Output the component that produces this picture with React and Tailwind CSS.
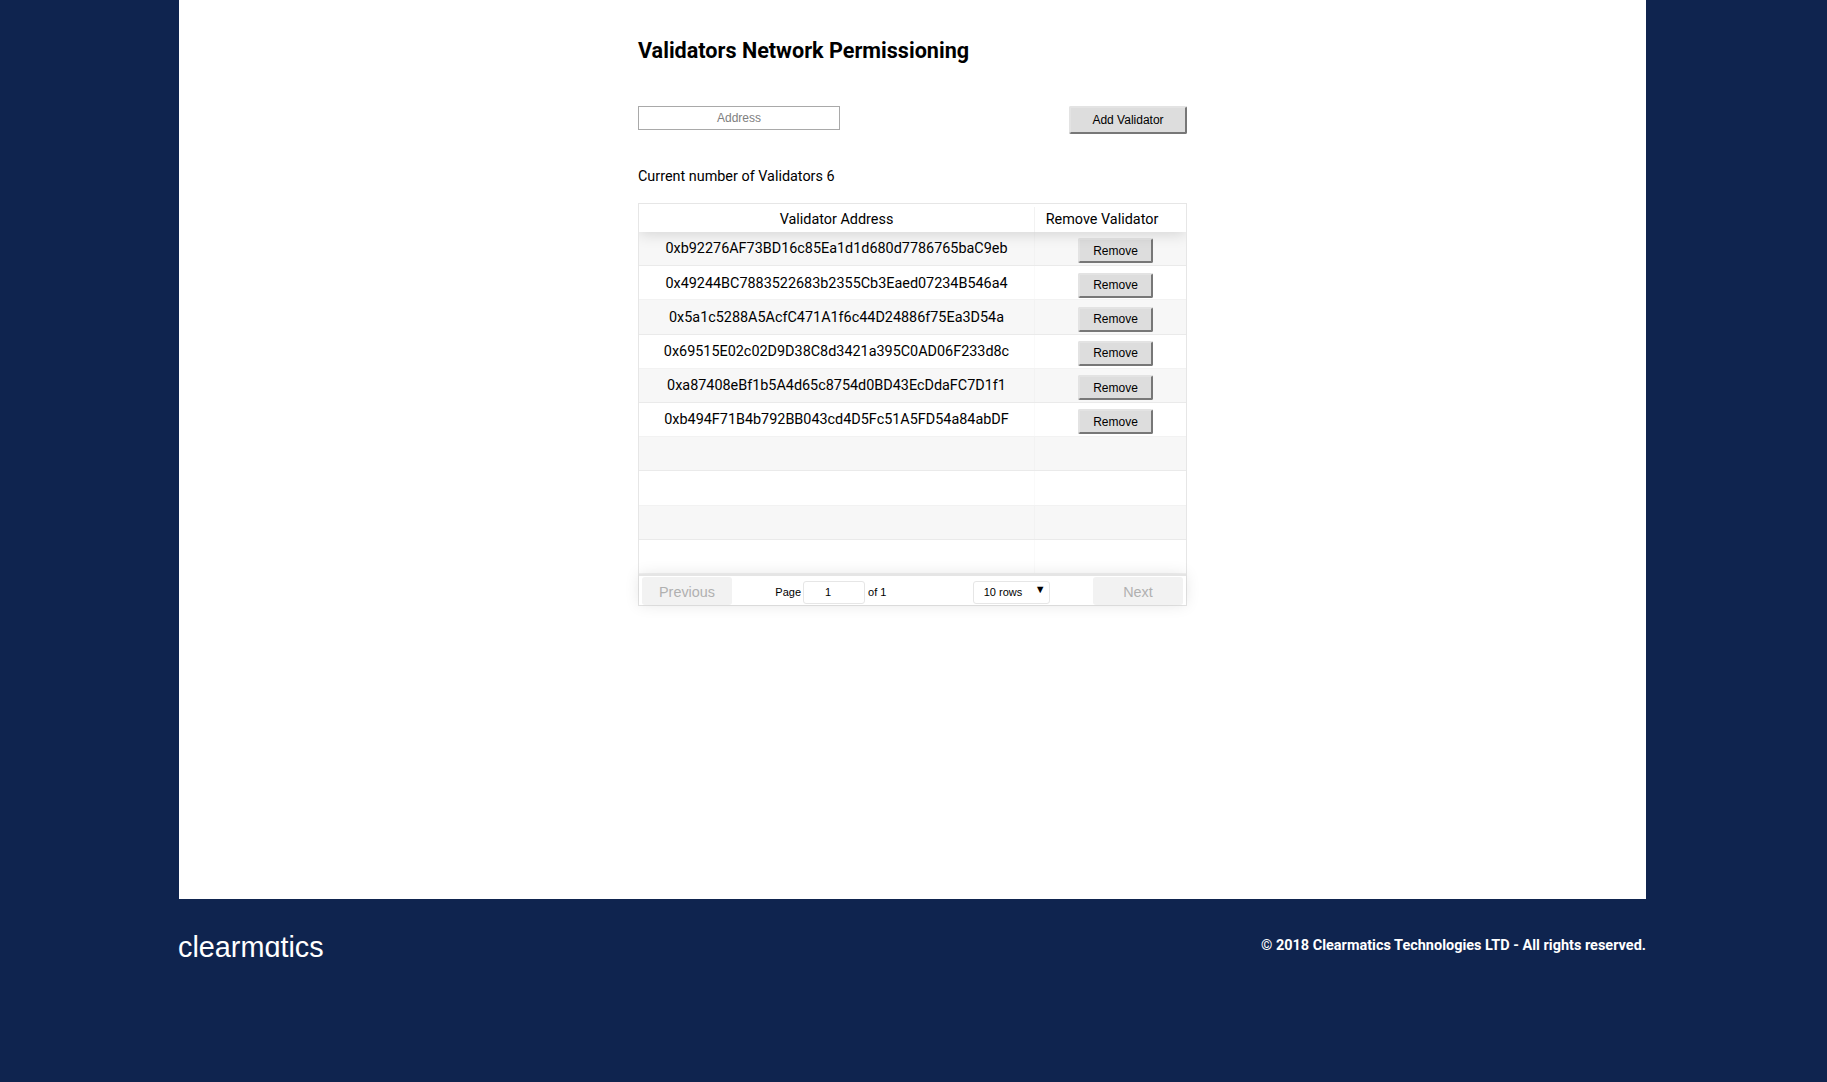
const addrs = [
  "0xb92276AF73BD16c85Ea1d1d680d7786765baC9eb",
  "0x49244BC7883522683b2355Cb3Eaed07234B546a4",
  "0x5a1c5288A5AcfC471A1f6c44D24886f75Ea3D54a",
  "0x69515E02c02D9D38C8d3421a395C0AD06F233d8c",
  "0xa87408eBf1b5A4d65c8754d0BD43EcDdaFC7D1f1",
  "0xb494F71B4b792BB043cd4D5Fc51A5FD54a84abDF",
  "", "", "", "",
];

function OutsetButton({ children, className }) {
  return (
    <button className={"bg-[#dddddd] text-black border-2 border-t-[#e3e3e3] border-l-[#e3e3e3] border-r-[#777777] border-b-[#777777] rounded-[2px] font-['Liberation_Sans',sans-serif] " + className}>
      {children}
    </button>
  );
}

export default function App() {
  return (
    <div className="min-h-[1082px] bg-[#0f244f] font-['Roboto',sans-serif] text-[14.4px] text-black">
      <main className="ml-[179px] mr-[181px] h-[899px] bg-white">
        <div className="ml-[459px] w-[549px]">
          <h1 className="pt-[37px] text-[21.6px] leading-[28px] font-bold">Validators Network Permissioning</h1>
          <div className="mt-[41px] flex items-start justify-between">
            <input
              placeholder="Address"
              className="h-[24px] w-[202px] border border-[#a9a9a9] pb-[1px] text-center font-['Liberation_Sans',sans-serif] text-[12px] placeholder:text-[#808080]"
            />
            <OutsetButton className="h-[28px] w-[118px] text-[12px]">Add Validator</OutsetButton>
          </div>
          <p className="mt-[33px] h-[20px] leading-[20px]">Current number of Validators 6</p>
          <div className="mt-[16px] h-[403px] w-[549px] border border-[#e6e6e6] bg-white">
            <div className="overflow-hidden">
              <div className="relative z-10 flex h-[28px] bg-white pt-[3px] shadow-[0_2px_15px_0_rgba(0,0,0,0.15)]">
                <div className="flex w-[396px] items-center justify-center border-r border-[rgba(0,0,0,0.05)]">Validator Address</div>
                <div className="flex flex-1 items-center justify-center pr-[17px]">Remove Validator</div>
              </div>
              {addrs.map((a, i) => (
                <div key={i} className={"flex h-[34.2px] border-b border-[rgba(0,0,0,0.05)] " + (i % 2 === 0 ? "bg-[#f7f7f7]" : "bg-white")}>
                  <div className="w-[396px] border-r border-[rgba(0,0,0,0.02)] pt-[7.4px] text-center leading-[20px]">{a}</div>
                  <div className="flex flex-1 items-start justify-center pt-[6.4px] pl-[10px]">
                    {a && <OutsetButton className="h-[25px] w-[75px] text-[12px]">Remove</OutsetButton>}
                  </div>
                </div>
              ))}
            </div>
            <div className="relative z-10 flex h-[31px] items-center justify-between border-t-2 border-[rgba(0,0,0,0.1)] bg-white px-[3px] pt-[2px] font-['Liberation_Sans',sans-serif] shadow-[0_0_15px_0_rgba(0,0,0,0.1)]">
              <div className="flex h-[28px] w-[90px] items-center justify-center rounded-[3px] bg-[#f2f2f2] pt-[2px] text-[14.4px] text-[#b0b0b0]">Previous</div>
              <div className="ml-[43px] flex items-center pt-[2px] text-[11px]">
                <span>Page</span>
                <span className="ml-[2px] mr-[3px] flex h-[23px] w-[62px] items-center rounded-[3px] border border-[#e6e6e6] pl-[21px]">1</span>
                <span>of 1</span>
              </div>
              <div className="relative ml-[86px] mr-[43px] mt-[2px] flex h-[23px] w-[77px] items-center rounded-[3px] border border-[#e6e6e6] pl-[10px] text-[11px]">
                10 rows
                <span className="absolute right-[3px] top-[-1px] text-[11px]">▼</span>
              </div>
              <div className="flex h-[28px] w-[90px] items-center justify-center rounded-[3px] bg-[#f2f2f2] pt-[2px] text-[14.4px] text-[#b0b0b0]">Next</div>
            </div>
          </div>
        </div>
      </main>
      <footer className="ml-[178px] mr-[181px] flex items-start justify-between text-white">
        <span className="mt-[30px] font-['Liberation_Sans',sans-serif] text-[28.8px] leading-[36px]">clearmɑtics</span>
        <span className="mt-[37px] text-[14.47px] leading-[20px] font-bold">© 2018 Clearmatics Technologies LTD - All rights reserved.</span>
      </footer>
    </div>
  );
}
